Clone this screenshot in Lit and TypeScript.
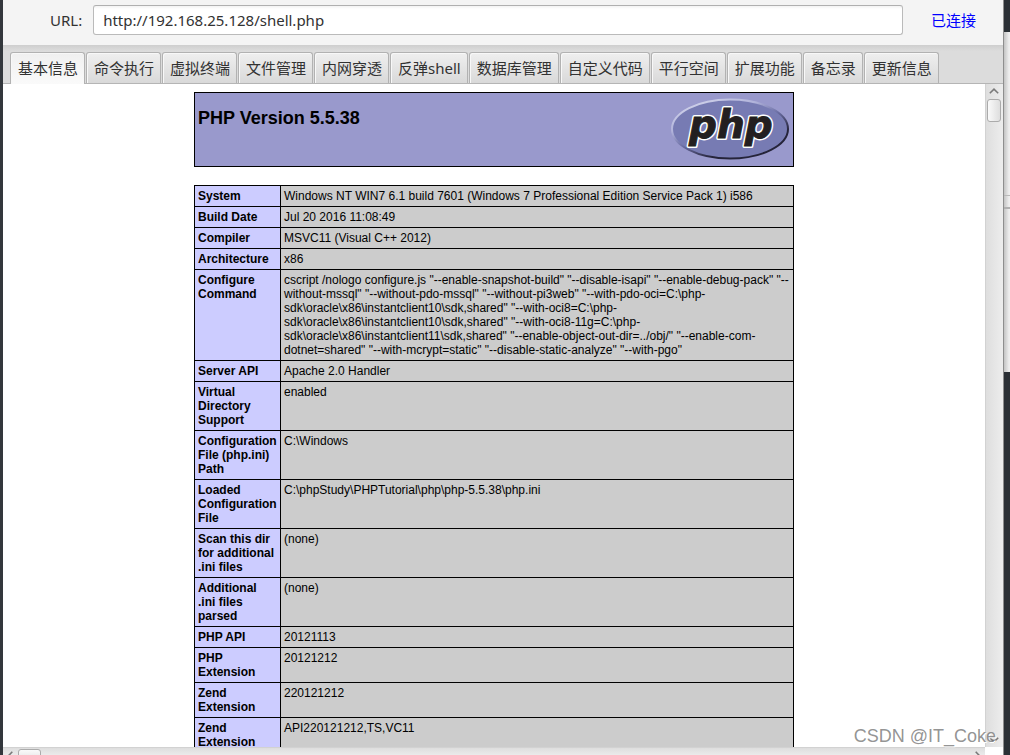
import { LitElement, html, css } from "lit";
import { customElement, state } from "lit/decorators.js";
import { classMap } from "lit/directives/class-map.js";

const TABS = [
  "基本信息", "命令执行", "虚拟终端", "文件管理", "内网穿透", "反弹shell",
  "数据库管理", "自定义代码", "平行空间", "扩展功能", "备忘录", "更新信息",
];

const ROWS: [string, string][] = [
  ["System", "Windows NT WIN7 6.1 build 7601 (Windows 7 Professional Edition Service Pack 1) i586"],
  ["Build Date", "Jul 20 2016 11:08:49"],
  ["Compiler", "MSVC11 (Visual C++ 2012)"],
  ["Architecture", "x86"],
  ["Configure Command", `cscript /nologo configure.js "--enable-snapshot-build" "--disable-isapi" "--enable-debug-pack" "--without-mssql" "--without-pdo-mssql" "--without-pi3web" "--with-pdo-oci=C:\\php-sdk\\oracle\\x86\\instantclient10\\sdk,shared" "--with-oci8=C:\\php-sdk\\oracle\\x86\\instantclient10\\sdk,shared" "--with-oci8-11g=C:\\php-sdk\\oracle\\x86\\instantclient11\\sdk,shared" "--enable-object-out-dir=../obj/" "--enable-com-dotnet=shared" "--with-mcrypt=static" "--disable-static-analyze" "--with-pgo"`],
  ["Server API", "Apache 2.0 Handler"],
  ["Virtual Directory Support", "enabled"],
  ["Configuration File (php.ini) Path", "C:\\Windows"],
  ["Loaded Configuration File", "C:\\phpStudy\\PHPTutorial\\php\\php-5.5.38\\php.ini"],
  ["Scan this dir for additional .ini files", "(none)"],
  ["Additional .ini files parsed", "(none)"],
  ["PHP API", "20121113"],
  ["PHP Extension", "20121212"],
  ["Zend Extension", "220121212"],
  ["Zend Extension", "API220121212,TS,VC11"],
];

@customElement("php-info")
export class PhpInfo extends LitElement {
  static styles = css`
    :host {
      display: block;
      padding: 8px;
      font: 12px/14px "Liberation Sans", Arial, sans-serif;
      color: #000;
    }
    .banner {
      box-sizing: border-box;
      max-width: 600px;
      margin: 0 auto 18px;
      padding: 3px;
      border: 1px solid #000;
      background: #9999cc;
      display: flex;
      justify-content: space-between;
      align-items: flex-start;
    }
    .title {
      margin: 12px 0 0;
      font-size: 18px;
      line-height: 20px;
      font-weight: bold;
    }
    .logo {
      display: block;
      width: 120px;
      height: 67px;
    }
    .word {
      font: italic bold 39px "DejaVu Sans", sans-serif;
      fill: #231f20;
      stroke: #231f20;
      stroke-width: 1px;
    }
    .halo {
      stroke: #fff;
      stroke-width: 4px;
      stroke-linejoin: round;
    }
    .info {
      width: 100%;
      max-width: 600px;
      margin: 0 auto;
      border-collapse: collapse;
    }
    .name,
    .value {
      border: 1px solid #000;
      padding: 3px;
      text-align: left;
      vertical-align: top;
    }
    .name {
      width: 79px;
      background: #ccccff;
      font-weight: bold;
    }
    .value {
      background: #cccccc;
    }
  `;

  render() {
    return html`
      <header class="banner">
        <h1 class="title">PHP Version 5.5.38</h1>
        <svg class="logo" viewBox="0 0 120 67" role="img" aria-label="PHP logo">
          <defs>
            <linearGradient id="rim" x1="0.15" y1="0" x2="0.85" y2="1">
              <stop offset="0" stop-color="#d5d7ec" />
              <stop offset="0.3" stop-color="#b0b2da" />
              <stop offset="0.5" stop-color="#6c6fa5" />
              <stop offset="0.75" stop-color="#25243a" />
              <stop offset="1" stop-color="#25243a" />
            </linearGradient>
          </defs>
          <ellipse cx="60" cy="33" rx="58" ry="29.5" fill="#777bb3" stroke="url(#rim)" stroke-width="2" />
          <text class="word" x="19" y="42"><tspan class="halo">php</tspan></text>
          <text class="word" x="19" y="42" aria-hidden="true">php</text>
        </svg>
      </header>
      <table class="info">
        <tbody>
          ${ROWS.map(([name, value]) => html`
            <tr><th class="name" scope="row">${name}</th><td class="value">${value}</td></tr>
          `)}
        </tbody>
      </table>
    `;
  }
}

@customElement("app-root")
export class AppRoot extends LitElement {
  @state() private active = 0;

  static styles = css`
    :host {
      display: grid;
      grid-template-columns: 3px minmax(0, 1fr) 7px;
      height: 100vh;
      overflow: hidden;
      position: relative;
      font: 15px/20px "Noto Sans", "Noto Sans CJK SC", sans-serif;
      color: #323232;
    }
    .edge {
      background: #33373c;
    }
    .behind {
      display: flex;
      flex-direction: column;
      background: #2b3035;
      border-left: 1px solid #8e8e8e;
    }
    .behind-top {
      height: 32px;
    }
    .behind-page {
      height: 163px;
      background: linear-gradient(90deg, #c4c4c4, #eeeeee 5px);
    }
    .behind-bar {
      height: 11px;
      border-top: 1px solid #b9b9b9;
      border-bottom: 2px solid #b0b0b0;
      background: linear-gradient(90deg, #c4c4c4, #eeeeee 5px);
    }
    .window {
      display: flex;
      flex-direction: column;
      min-height: 0;
      background: #fff;
    }
    .address {
      display: flex;
      align-items: center;
      height: 45px;
      box-sizing: border-box;
      padding: 0 27px 5px 47px;
      background: #f4f4f4;
    }
    .label {
      margin-right: 11px;
    }
    .url {
      flex: 1;
      min-width: 0;
      box-sizing: border-box;
      height: 30px;
      margin-right: 28px;
      padding: 0 9px;
      border: 1px solid #bababa;
      border-top-color: #b0b0b0;
      border-radius: 3px;
      background: linear-gradient(#f3f3f3, #fff 3px);
      font: inherit;
      color: inherit;
      outline: none;
    }
    .status {
      color: #0000ff;
    }
    .tabs {
      display: flex;
      align-items: flex-end;
      gap: 1px;
      height: 39px;
      box-sizing: border-box;
      padding-left: 7px;
      border-bottom: 1px solid #b5b5b5;
      background: linear-gradient(#cecece, #dcdcdc 6px);
    }
    .tab {
      height: 31px;
      box-sizing: border-box;
      padding: 0 6px 1px 7px;
      border: 1px solid #b2b2b2;
      border-bottom: 0;
      border-radius: 3px 3px 0 0;
      background: linear-gradient(#efefef, #d9d9d9);
      box-shadow: inset 1px 1px #f8f8f8;
      font: inherit;
      color: inherit;
      white-space: nowrap;
    }
    .tab.active {
      height: 32px;
      margin-bottom: -1px;
      padding-bottom: 2px;
      background: linear-gradient(#f0f0f0, #fafafa);
    }
    .view {
      flex: 1;
      min-height: 0;
      display: grid;
      grid-template-columns: minmax(0, 1fr) 18px;
      grid-template-rows: minmax(0, 1fr) 8px;
    }
    .page {
      overflow: hidden;
    }
    .vbar {
      box-sizing: border-box;
      display: flex;
      flex-direction: column;
      align-items: center;
      padding: 4px 1px 4px 0;
      border-left: 1px solid #d2d2d2;
      background: linear-gradient(90deg, #dedede, #ededed);
    }
    .hbar {
      box-sizing: border-box;
      display: flex;
      align-items: flex-start;
      padding: 1px 4px 0;
      border-top: 1px solid #d2d2d2;
      background: linear-gradient(#dedede, #ebebeb);
      overflow: hidden;
    }
    .arrow {
      display: block;
      flex: none;
      fill: none;
      stroke: #7a7a7a;
      stroke-width: 1.6;
    }
    .spacer {
      flex: 1;
    }
    .vthumb,
    .hthumb {
      box-sizing: border-box;
      flex: none;
      border: 1px solid #ababab;
      border-radius: 3px;
    }
    .vthumb {
      width: 14px;
      height: 23px;
      margin-top: 5px;
      background: linear-gradient(90deg, #fafafa, #dedede);
    }
    .hthumb {
      width: 23px;
      height: 14px;
      margin-left: 5px;
      background: linear-gradient(#fafafa, #dedede);
    }
    .watermark {
      position: absolute;
      right: 14px;
      bottom: 7px;
      font: 18px/24px "Liberation Sans", Arial, sans-serif;
      color: rgba(120, 120, 120, 0.8);
      text-shadow: 1px 1px #fff;
      pointer-events: none;
    }
  `;

  render() {
    return html`
      <div class="edge"></div>
      <main class="window">
        <div class="address">
          <label class="label" for="url">URL:</label>
          <input class="url" id="url" type="text" value="http://192.168.25.128/shell.php" />
          <span class="status">已连接</span>
        </div>
        <div class="tabs" role="tablist">
          ${TABS.map((name, i) => html`<button
            class=${classMap({ tab: true, active: i === this.active })}
            role="tab"
            aria-selected=${i === this.active ? "true" : "false"}
            @click=${() => { this.active = i; }}
          >${name}</button>`)}
        </div>
        <div class="view">
          <div class="page"><php-info></php-info></div>
          <div class="vbar">
            <svg class="arrow" width="10" height="6"><path d="M0.8 5.3 5 1.2 9.2 5.3" /></svg>
            <div class="vthumb"></div>
            <div class="spacer"></div>
            <svg class="arrow" width="10" height="6"><path d="M0.8 0.7 5 4.8 9.2 0.7" /></svg>
          </div>
          <div class="hbar">
            <svg class="arrow" width="6" height="14"><path d="M5.3 2.8 1.2 7 5.3 11.2" /></svg>
            <div class="hthumb"></div>
            <div class="spacer"></div>
            <svg class="arrow" width="6" height="14"><path d="M0.7 2.8 4.8 7 0.7 11.2" /></svg>
          </div>
        </div>
      </main>
      <div class="behind">
        <div class="behind-top"></div>
        <div class="behind-page"></div>
        <div class="behind-bar"></div>
        <div class="behind-page"></div>
      </div>
      <div class="watermark">CSDN @IT_Coke</div>
    `;
  }
}
